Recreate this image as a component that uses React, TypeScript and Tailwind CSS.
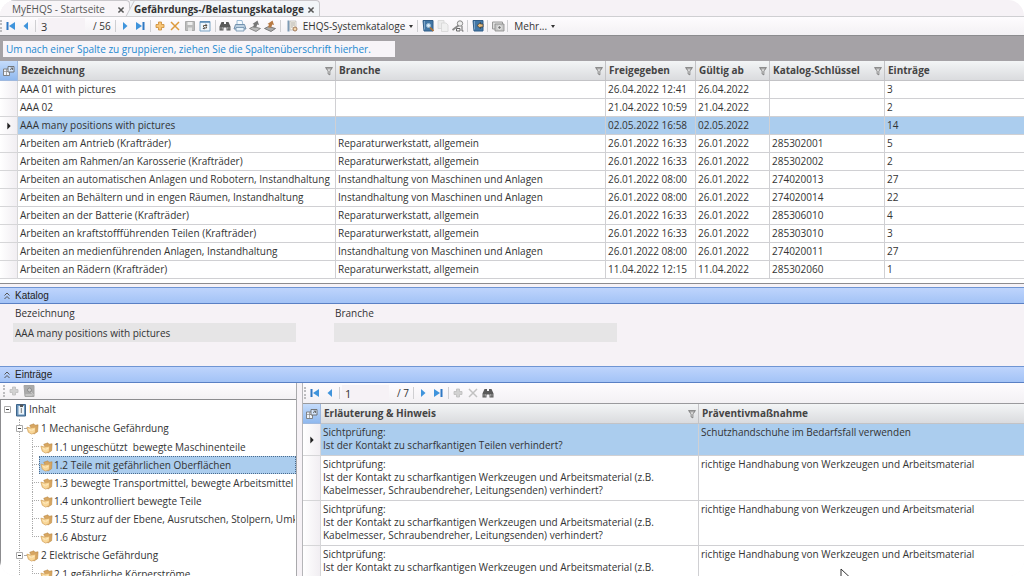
import React, { useState } from 'react';
import clsx from 'clsx';

const catalogs = [
  { name: 'AAA 01 with pictures', branch: '', released: '26.04.2022 12:41', valid: '26.04.2022', key: '', entries: 3 },
  { name: 'AAA 02', branch: '', released: '21.04.2022 10:59', valid: '21.04.2022', key: '', entries: 2 },
  { name: 'AAA many positions with pictures', branch: '', released: '02.05.2022 16:58', valid: '02.05.2022', key: '', entries: 14 },
  { name: 'Arbeiten am Antrieb (Krafträder)', branch: 'Reparaturwerkstatt, allgemein', released: '26.01.2022 16:33', valid: '26.01.2022', key: '285302001', entries: 5 },
  { name: 'Arbeiten am Rahmen/an Karosserie (Krafträder)', branch: 'Reparaturwerkstatt, allgemein', released: '26.01.2022 16:33', valid: '26.01.2022', key: '285302002', entries: 2 },
  { name: 'Arbeiten an automatischen Anlagen und Robotern, Instandhaltung', branch: 'Instandhaltung von Maschinen und Anlagen', released: '26.01.2022 08:00', valid: '26.01.2022', key: '274020013', entries: 27 },
  { name: 'Arbeiten an Behältern und in engen Räumen, Instandhaltung', branch: 'Instandhaltung von Maschinen und Anlagen', released: '26.01.2022 08:00', valid: '26.01.2022', key: '274020014', entries: 22 },
  { name: 'Arbeiten an der Batterie (Krafträder)', branch: 'Reparaturwerkstatt, allgemein', released: '26.01.2022 16:33', valid: '26.01.2022', key: '285306010', entries: 4 },
  { name: 'Arbeiten an kraftstoffführenden Teilen (Krafträder)', branch: 'Reparaturwerkstatt, allgemein', released: '26.01.2022 16:33', valid: '26.01.2022', key: '285303010', entries: 3 },
  { name: 'Arbeiten an medienführenden Anlagen, Instandhaltung', branch: 'Instandhaltung von Maschinen und Anlagen', released: '26.01.2022 08:00', valid: '26.01.2022', key: '274020011', entries: 27 },
  { name: 'Arbeiten an Rädern (Krafträder)', branch: 'Reparaturwerkstatt, allgemein', released: '11.04.2022 12:15', valid: '11.04.2022', key: '285302060', entries: 1 },
];

const tree = [
  {
    title: '1 Mechanische Gefährdung',
    children: [
      '1.1 ungeschützt  bewegte Maschinenteile',
      '1.2 Teile mit gefährlichen Oberflächen',
      '1.3 bewegte Transportmittel, bewegte Arbeitsmittel',
      '1.4 unkontrolliert bewegte Teile',
      '1.5 Sturz auf der Ebene, Ausrutschen, Stolpern, Umknicken',
      '1.6 Absturz',
    ],
  },
  {
    title: '2 Elektrische Gefährdung',
    children: ['2.1 gefährliche Körperströme'],
  },
];

const toolText = 'Ist der Kontakt zu scharfkantigen Werkzeugen und Arbeitsmaterial (z.B. Kabelmesser, Schraubendreher, Leitungsenden) verhindert?';
const toolMeasure = 'richtige Handhabung von Werkzeugen und Arbeitsmaterial';

const entries = [
  { hint: 'Ist der Kontakt zu scharfkantigen Teilen verhindert?', measure: 'Schutzhandschuhe im Bedarfsfall verwenden' },
  { hint: toolText, measure: toolMeasure },
  { hint: toolText, measure: toolMeasure },
  { hint: toolText, measure: toolMeasure },
];

const icons: Record<string, React.ReactNode> = {
  first: <><path d="M3.500 3v8" stroke="#2f78c4" strokeWidth="2" /><path d="M11 3v8L5 7z" fill="#3f94dc" /></>,
  prev: <path d="M9 3v8L4.500 7z" fill="#3f94dc" />,
  next: <path d="M5 3v8L9.500 7z" fill="#3f94dc" />,
  last: <><path d="M10.500 3v8" stroke="#2f78c4" strokeWidth="2" /><path d="M3 3v8l6-4z" fill="#3f94dc" /></>,
  add: <path d="M5.500 3h3v2.500H11v3H8.500V11h-3V8.500H3v-3h2.500z" fill="#f8c576" stroke="#c98a35" strokeWidth=".8" />,
  remove: <path d="M3 3l8 8M11 3L3 11" stroke="#dd9a3c" strokeWidth="1.500" />,
  save: <><path d="M2.500 2.500h9v9h-9z" fill="#bbb" stroke="#aaa" /><path d="M4.500 3h5v3h-5z" fill="#ededed" /><path d="M5 8.500h4V12H5z" fill="#e2e2e2" /></>,
  refresh: <><path d="M2 2.500h10v9.500H2z" fill="#eef6fc" stroke="#7ba3c4" /><path d="M2 3h10" stroke="#5688b4" strokeWidth="1.500" /><path d="M5.500 8V6.500h2.500M8.500 7.500V9H6" stroke="#6b5a44" fill="none" /><path d="M7.500 4.500l2 2-2 1zM6.500 8l-2 1.500 2 1z" fill="#444" /></>,
  find: <><path d="M3.500 3h2.500v2h2V3h2.500l2 4.500v4H8.500v-3h-3v3H1.500v-4z" fill="#5a5a5a" /><path d="M3 8v2.500M4.500 8v2.500M9.500 8v2.500M11 8v2.500" stroke="#b5b5b5" strokeWidth=".7" /></>,
  print: <><path d="M4 1.500h5L10 6H4z" fill="#f5faff" stroke="#84a9c9" strokeWidth=".8" /><path d="M2.500 5.500h9l1.500 4.500H1z" fill="#bcd0e1" stroke="#6a8aa8" strokeWidth=".9" /><path d="M3 8.500h8v3.500H3z" fill="#e6f2fb" stroke="#6a8aa8" strokeWidth=".8" /></>,
  importFile: <><path d="M1.500 9.500l4-2 7 2-4.500 3z" fill="#bbb" stroke="#777" strokeWidth=".8" /><path d="M5 8.500l1-3-1.500-.5L9.500 1.500l1.500 4.500-1.800-.5-1 3z" fill="#777" /></>,
  exportFile: <><path d="M1.500 9.500l4-2 7 2-4.500 3z" fill="#aaa" stroke="#666" strokeWidth=".8" /><path d="M5 8.500l1-3-1.500-.5L9.500 1.500l1.500 4.500-1.800-.5-1 3z" fill="#b87a43" /></>,
  catalog: <><path d="M2.500 1.500h2v11h-2z" fill="#7d9ab4" /><path d="M5 2h6v9H5z" fill="#faf5ea" stroke="#aaa" strokeWidth=".6" /><path d="M6 4h4M6 6h4M6 8h2" stroke="#999" strokeWidth=".8" /><circle cx="10" cy="10" r="2" fill="#f3d6ac" stroke="#a0795a" /></>,
  bookFind: <><path d="M2 1.500h10v10.500H3z" fill="#4277a6" stroke="#315e88" /><path d="M3.500 2v8.500" stroke="#7da5c8" /><circle cx="7.500" cy="6.500" r="2" fill="#d8ecfa" stroke="#9dbbd2" /><path d="M9 8.500l3.500 3.500" stroke="#b77430" strokeWidth="1.700" /></>,
  copy: <><path d="M2 1.500h6v8H2z" fill="#ececec" stroke="#d6d6d6" strokeWidth=".8" /><path d="M5.500 4h4.500l2 2v6.500H5.500z" fill="#f0f0f0" stroke="#d6d6d6" strokeWidth=".8" /></>,
  inspect: <><circle cx="9" cy="4.500" r="2.700" fill="#eee" stroke="#888" /><path d="M7.500 6.500L1.500 11" stroke="#888" strokeWidth="1.800" /><path d="M5.500 9.500h3.500v2.500H5.500zM11 7v5h1.500" fill="none" stroke="#666" /></>,
  book: <><path d="M2 1.500h10v10.500H3z" fill="#4277a6" stroke="#315e88" /><path d="M3.500 2v8.500" stroke="#7da5c8" /><path d="M12 5H9.500V3.500L6 6.500l3.500 3V8H12z" fill="#e8bd7d" stroke="#333" strokeWidth=".7" /></>,
  camera: <><path d="M1.500 3h10v7h-10z" fill="#dedede" stroke="#999" /><path d="M4 5h9v7H4z" fill="#c8c8c8" stroke="#888" strokeWidth=".8" /><circle cx="8.500" cy="8.500" r="1.800" fill="#777" stroke="#f5f5f5" /></>,
  addOff: <path d="M5.500 3h3v2.500H11v3H8.500V11h-3V8.500H3v-3h2.500z" fill="#d2d2d2" stroke="#bdbdbd" strokeWidth=".8" />,
  removeOff: <path d="M3 3l8 8M11 3L3 11" stroke="#c2c2c2" strokeWidth="1.500" />,
  bookOff: <><path d="M2 1.500h10v11H3z" fill="#aaa" stroke="#a5a5a5" /><path d="M3.500 11h7" stroke="#ddd" /><circle cx="7.500" cy="6" r="2" fill="#ccc" stroke="#8d8d8d" /><path d="M9 8l3 3.500" stroke="#ccc" /></>,
  contents: <><path d="M2.500 1.500h9v11.500h-9z" fill="#6b94ba" stroke="#3d648a" /><path d="M4.500 3h5.500v8.500H4.500z" fill="#edf5fa" /><path d="M6 1.500h3V4H6z" fill="#555" /><path d="M7.300 5v5" stroke="#777" /></>,
  folder: <><path d="M4 3.500L8.500 2l1 1.500 3.500-.5-.5 7.500-4 2.500z" fill="#d7a661" stroke="#b98745" strokeWidth=".6" /><path d="M1 5.500l3.500 1 6-1-.5 6-4 1.500-3.500-2z" fill="#f9d798" stroke="#d3a05a" strokeWidth=".8" /><path d="M3 8l2.500 1M6 9l3-1" stroke="#fff0cf" strokeWidth=".9" /></>,
  columns: <><path d="M1.500 5h6v6.500h-6z" fill="#f0f5fb" stroke="#777" strokeWidth=".9" /><path d="M2 7.500h5M4.500 5v6" stroke="#8a8a8a" strokeWidth=".7" /><path d="M6 2.500h6V8H6z" fill="#d6e8ff" stroke="#6a6a6a" strokeWidth=".9" /><path d="M8 6l2.500-2M8.500 4h2v2" stroke="#555" fill="none" strokeWidth=".8" /></>,
  filter: <path d="M3 3h8L8 7v4.500l-2-1V7zM4 4.500h6" fill="#f4f4f4" stroke="#666" strokeWidth=".9" />,
  marker: <path d="M5 3v8l4-4z" fill="#222" />,
  chevrons: <path d="M4.500 6.500L7 4l2.500 2.500M4.500 10L7 7.500 9.500 10" fill="none" stroke="#555" />,
  close: <path d="M4 4l6 6M10 4l-6 6" stroke="#555" strokeWidth="1.800" />,
};

const Icon: React.FC<{ name: string; className?: string }> = ({ name, className = 'w-3.5 h-3.5' }) => (
  <svg viewBox="0 0 14 14" fill="none" aria-hidden="true" className={clsx('shrink-0', className)}>{icons[name]}</svg>
);

const Tool: React.FC<{ icon: string; label: string; disabled?: boolean }> = ({ icon, label, disabled }) => (
  <button aria-label={label} disabled={disabled} className="flex h-4 w-[15px] shrink-0 items-center justify-center">
    <Icon name={icon} />
  </button>
);

const Sep = () => <span className="mx-0.5 h-3 w-px shrink-0 bg-[#cfcfd2]"></span>;

const Grip = () => <span className="mr-px h-3 w-0 shrink-0 border-l-2 border-dotted border-[#bdbdc0]"></span>;

const Caret = () => <span className="h-0 w-0 border-x-2 border-t-[3px] border-x-transparent border-t-[#333]"></span>;

const Pager: React.FC<{ value: string; total: number; label: string }> = ({ value, total, label }) => (
  <>
    <Tool icon="first" label="Erster" />
    <Tool icon="prev" label="Vorheriger" />
    <Sep />
    <input aria-label={label} defaultValue={value} className="h-4 w-[47px] shrink-0 bg-[#f6f2f6] px-[3px] text-[11px]" />
    <span className="shrink-0 pr-0.5 pl-2 whitespace-nowrap">/ {total}</span>
    <Sep />
    <Tool icon="next" label="Nächster" />
    <Tool icon="last" label="Letzter" />
    <Sep />
  </>
);

const HeadCell: React.FC<{ title: string; filter?: boolean }> = ({ title, filter = true }) => (
  <th scope="col" className="h-5 border-r border-b border-[#c3c3c6] p-0 pl-[3px] text-left font-bold text-[#444] last:border-r-0">
    <div className="flex items-center justify-between">
      <span className="truncate">{title}</span>
      {filter && (
        <button aria-label={`${title} filtern`} className="flex"><Icon name="filter" className="w-3 h-3" /></button>
      )}
    </div>
  </th>
);

const CornerCell = () => (
  <th className="h-5 border-r border-b border-[#9fb9df] bg-linear-to-b from-[#c5dcfb] to-[#8fb8ee] p-0">
    <button aria-label="Spaltenauswahl" className="mx-auto flex"><Icon name="columns" /></button>
  </th>
);

const MarkerCell: React.FC<{ active: boolean }> = ({ active }) => (
  <td className="border-r border-b border-[#d6d6d8] bg-linear-to-r from-white to-[#f1eef2] p-0 align-middle">
    {active && <Icon name="marker" className="mx-auto w-3 h-3" />}
  </td>
);

const SectionBar: React.FC<{ title: string }> = ({ title }) => (
  <button className="flex h-[17px] w-full shrink-0 items-center border-y border-t-[#6f95d3] border-b-[#5a80c4] bg-linear-to-b from-[#bed4fc] to-[#a3c3f6] font-['Liberation_Sans',sans-serif] text-[10px] text-[#222]">
    <Icon name="chevrons" />
    <span className="ml-px">{title}</span>
  </button>
);

const Tab: React.FC<{ title: string; active?: boolean; onSelect: () => void }> = ({ title, active, onSelect }) => (
  <div
    className={clsx(
      'relative flex h-4 items-center rounded-tr-sm border-t border-r border-[#c9c7cb] pt-0.5 pl-3 before:absolute before:inset-y-0 before:-top-px before:left-0 before:w-3 before:-skew-x-[28deg] before:border-t before:border-l before:border-[#c9c7cb]',
      active ? 'w-[190px] bg-[#f2f5f8] before:bg-[#f2f5f8]' : 'w-[130px] bg-[#f8f5f8] before:bg-[#f8f5f8]'
    )}
  >
    <button
      role="tab"
      aria-selected={!!active}
      onClick={onSelect}
      className={clsx('relative flex-1 truncate text-left', active ? '-ml-2 font-bold' : 'text-[#555]')}
    >
      {title}
    </button>
    <button aria-label={`${title} schließen`} className="relative mr-0.5 flex"><Icon name="close" className="w-3 h-3" /></button>
  </div>
);

const Expander = () => (
  <button aria-label="Zuklappen" className="relative flex h-[9px] w-[9px] shrink-0 items-center justify-center">
    <svg viewBox="0 0 9 9" className="w-[9px] h-[9px]" aria-hidden="true">
      <path d="M1.500 1.500h6v6h-6z" fill="white" stroke="#aaa" />
      <path d="M3 4.500h3" stroke="#444" />
    </svg>
  </button>
);

const App: React.FC = () => {
  const [tab, setTab] = useState(1);
  const [row, setRow] = useState(2);
  const [entry, setEntry] = useState(0);
  const [node, setNode] = useState('1.2 Teile mit gefährlichen Oberflächen');

  return (
    <div className="relative flex h-screen flex-col overflow-hidden rounded-2xl bg-[#f6f2f6] font-['Open_Sans',sans-serif] text-[10px] leading-[13px] text-[#333]">
      <div role="tablist" className="flex h-[17px] shrink-0 items-end border-b border-[#cfcfd2]">
        <Tab title="MyEHQS - Startseite" active={tab === 0} onSelect={() => setTab(0)} />
        <Tab title="Gefährdungs-/Belastungskataloge" active={tab === 1} onSelect={() => setTab(1)} />
      </div>

      <div className="flex h-[19px] shrink-0 items-center overflow-hidden border-b border-[#8c8c8f] bg-linear-to-b from-[#fefcfe] to-[#f3f1f4]">
        <Grip />
        <Pager value="3" total={56} label="Katalog Nummer" />
        <Tool icon="add" label="Neu" />
        <Tool icon="remove" label="Löschen" />
        <Tool icon="save" label="Speichern" disabled />
        <Tool icon="refresh" label="Aktualisieren" />
        <Sep />
        <Tool icon="find" label="Suchen" />
        <Tool icon="print" label="Drucken" />
        <Tool icon="importFile" label="Importieren" />
        <Tool icon="exportFile" label="Exportieren" />
        <Sep />
        <button className="ml-0.5 flex items-center gap-1 whitespace-nowrap">
          <Icon name="catalog" />
          EHQS-Systemkataloge
          <Caret />
        </button>
        <span className="w-0.5"></span>
        <Sep />
        <Tool icon="bookFind" label="Katalog suchen" />
        <Tool icon="copy" label="Kopieren" disabled />
        <Tool icon="inspect" label="Prüfen" />
        <Sep />
        <Tool icon="book" label="Katalog übernehmen" />
        <Sep />
        <Tool icon="camera" label="Bilder" />
        <Sep />
        <button className="ml-1 flex items-center gap-1 whitespace-nowrap">Mehr... <Caret /></button>
      </div>

      <div className="flex h-[25px] shrink-0 items-center bg-[#a5a2a6] px-[3px]">
        <p className="bg-[#f7f4f8] py-px pr-6 pl-[3px] leading-[14px] text-[#2589d0]">
          Um nach einer Spalte zu gruppieren, ziehen Sie die Spaltenüberschrift hierher.
        </p>
      </div>

      <div className="shrink-0 border-b border-[#8c8c8f] bg-white pb-1">
        <table className="w-full table-fixed border-separate border-spacing-0">
          <colgroup>
            <col className="w-[18px]" />
            <col className="w-[318px]" />
            <col className="w-[270px]" />
            <col className="w-[90px]" />
            <col className="w-[74px]" />
            <col className="w-[115px]" />
            <col />
          </colgroup>
          <thead className="bg-linear-to-b from-[#f3f5f6] to-[#d9dadd]">
            <tr>
              <CornerCell />
              <HeadCell title="Bezeichnung" />
              <HeadCell title="Branche" />
              <HeadCell title="Freigegeben" />
              <HeadCell title="Gültig ab" />
              <HeadCell title="Katalog-Schlüssel" />
              <HeadCell title="Einträge" filter={false} />
            </tr>
          </thead>
          <tbody>
            {catalogs.map((c, i) => (
              <tr key={c.name} onClick={() => setRow(i)} className={i === row ? 'bg-[#abcdee]' : 'bg-white'}>
                <MarkerCell active={i === row} />
                {[c.name, c.branch, c.released, c.valid, c.key, c.entries].map((value, j) => (
                  <td key={j} className="h-[18px] truncate border-r border-b border-[#d0d0d3] p-0 pl-0.5 last:border-r-0">{value}</td>
                ))}
              </tr>
            ))}
          </tbody>
        </table>
      </div>

      <section className="mt-[3px] shrink-0">
        <SectionBar title="Katalog" />
        <div className="flex h-[62px] gap-[38px] pt-[3px] pl-[13px]">
          <label className="w-[283px]">
            <span className="block pb-[3px] pl-0.5">Bezeichnung</span>
            <input readOnly value={catalogs[row].name} className="block h-[19px] w-full bg-[#e6e5e6] px-0.5" />
          </label>
          <label className="w-[283px]">
            <span className="block pb-[3px] pl-px">Branche</span>
            <input readOnly value={catalogs[row].branch} className="block h-[19px] w-full bg-[#e6e5e6] px-0.5" />
          </label>
        </div>
      </section>

      <SectionBar title="Einträge" />
      <div className="flex min-h-0 flex-1">
        <aside className="flex w-[297px] shrink-0 flex-col border-r border-[#a9a9ac]">
          <div className="flex h-[17px] shrink-0 items-center border-b border-[#8c8c8f] bg-linear-to-b from-[#fefcfe] to-[#f3f1f4] pl-[3px]">
            <Grip />
            <Tool icon="addOff" label="Eintrag hinzufügen" disabled />
            <Tool icon="bookOff" label="Aus Katalog" disabled />
          </div>
          <div className="min-h-0 flex-1 overflow-hidden border-l border-[#8c8c8f] bg-white whitespace-pre">
            <div className="flex h-[19px] items-center pl-0.5">
              <Expander />
              <Icon name="contents" className="mr-px ml-0.5 w-3.5 h-3.5" />
              Inhalt
            </div>
            <ul className="ml-[18px] border-l border-dotted border-[#aaa]">
              {tree.map((group) => (
                <li key={group.title}>
                  <div className="-ml-[5px] flex h-[19px] items-center">
                    <Expander />
                    <span className="w-0.5 border-t border-dotted border-[#aaa]"></span>
                    <Icon name="folder" className="mr-0.5 w-[13px] h-[13px]" />
                    {group.title}
                  </div>
                  <ul className="pl-3">
                    {group.children.map((child, i) => (
                      <li key={child} className="flex h-[18px]">
                        <span className="flex w-[7px] shrink-0 flex-col">
                          <span className="h-1/2 border-b border-l border-dotted border-[#aaa]"></span>
                          {i < group.children.length - 1 && <span className="h-1/2 border-l border-dotted border-[#aaa]"></span>}
                        </span>
                        <button
                          onClick={() => setNode(child)}
                          className={clsx(
                            'flex min-w-0 flex-1 items-center overflow-hidden border text-left whitespace-pre',
                            node === child ? 'border-dotted border-[#4a6b8d] bg-[#abcdee]' : 'border-transparent'
                          )}
                        >
                          <Icon name="folder" className="mr-px w-[13px] h-[13px]" />
                          {child}
                        </button>
                      </li>
                    ))}
                  </ul>
                </li>
              ))}
            </ul>
          </div>
        </aside>

        <div className="ml-[5px] min-w-0 flex-1 overflow-hidden border-l border-[#b5b5b8] bg-white">
          <div className="flex h-[21px] items-center border-b border-[#9a9a9d] bg-linear-to-b from-[#fefcfe] to-[#f3f1f4] pl-px">
            <Grip />
            <Pager value="1" total={7} label="Eintrag Nummer" />
            <Tool icon="addOff" label="Neu" disabled />
            <Tool icon="removeOff" label="Löschen" disabled />
            <Tool icon="find" label="Suchen" />
          </div>
          <table className="w-full table-fixed border-separate border-spacing-0">
            <colgroup>
              <col className="w-[18px]" />
              <col className="w-[378px]" />
              <col />
            </colgroup>
            <thead className="bg-linear-to-b from-[#f3f5f6] to-[#d9dadd]">
              <tr>
                <CornerCell />
                <HeadCell title="Erläuterung & Hinweis" />
                <HeadCell title="Präventivmaßnahme" filter={false} />
              </tr>
            </thead>
            <tbody>
              {entries.map((e, i) => (
                <tr key={i} onClick={() => setEntry(i)} className={clsx('align-top', i === entry ? 'bg-[#abcdee]' : 'bg-white')}>
                  <MarkerCell active={i === entry} />
                  <td className="border-r border-b border-[#d0d0d3] p-0 pt-0.5 pr-10 pb-[3px] pl-0.5">
                    Sichtprüfung:<br />{e.hint}
                  </td>
                  <td className="border-b border-[#d0d0d3] p-0 pt-0.5 pl-0.5">{e.measure}</td>
                </tr>
              ))}
            </tbody>
          </table>
        </div>
      </div>

      <svg viewBox="0 0 10 15" className="pointer-events-none absolute top-[568px] left-[840px] w-2.5 h-[15px]" aria-hidden="true">
        <path d="M1 1v11l3-2.500 2 4 1.500-.7-2-4L9 8.500z" fill="white" stroke="#333" />
      </svg>
    </div>
  );
};

export default App;
